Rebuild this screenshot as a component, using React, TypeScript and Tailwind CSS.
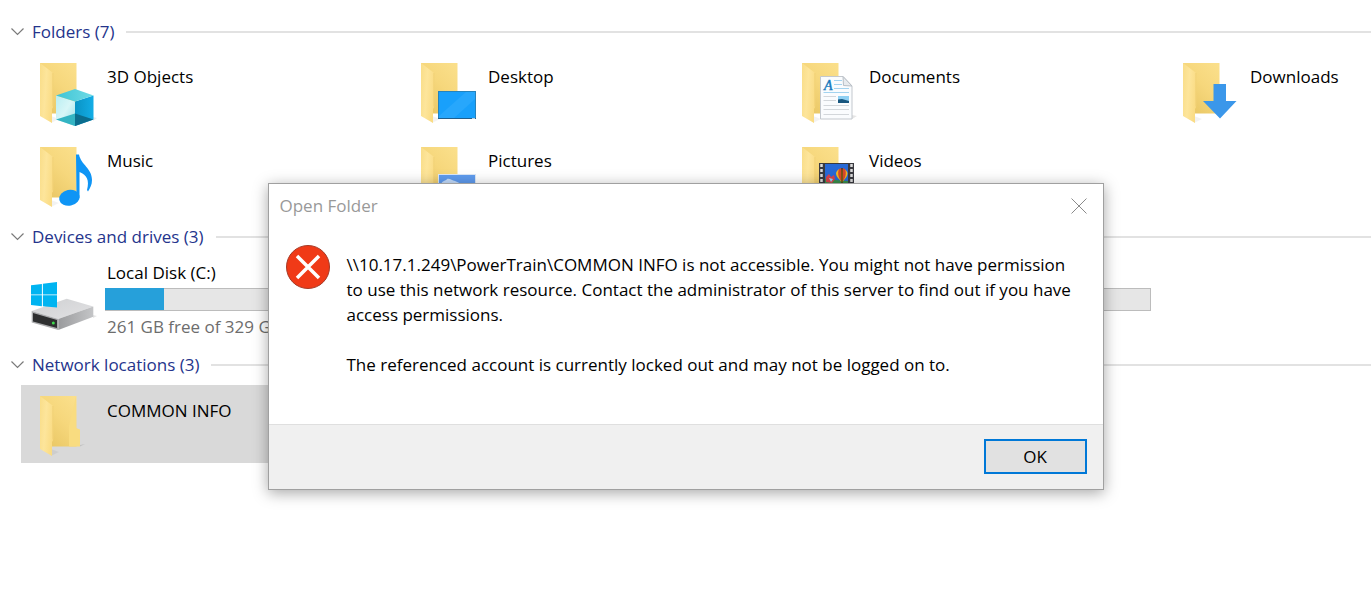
import { useId, type ReactNode } from "react";

function FolderIcon({ children }: { children?: ReactNode }) {
  const id = useId();
  const back = `${id}-back`;
  const flap = `${id}-flap`;
  return (
    <svg className="h-[70px] w-[74px] shrink-0" viewBox="0 0 74 70" aria-hidden="true">
      <defs>
        <linearGradient id={back} x1="1" y1="0" x2="0.3" y2="1">
          <stop offset="0" stopColor="#fbe08c" />
          <stop offset="0.5" stopColor="#f6d77c" />
          <stop offset="1" stopColor="#eac866" />
        </linearGradient>
        <linearGradient id={flap} x1="0" y1="0" x2="1" y2="0.3">
          <stop offset="0" stopColor="#f9dd88" />
          <stop offset="0.5" stopColor="#fde59b" />
          <stop offset="1" stopColor="#fadc85" />
        </linearGradient>
      </defs>
      <g transform={children ? undefined : "translate(0 -1)"}>
        <path d="M22 64L30 60L22 57Z" fill="#000" opacity="0.05" />
        <path d="M11 4H47.500V54.500H22L11 50Z" fill={`url(#${back})`} />
        {!children && (
          <>
            <path d="M47 4V36L51 37.500V54.500H40V34Z" fill="#f9dc80" />
            <path d="M51 53L56 52L51 54.500Z" fill="#000" opacity="0.1" />
          </>
        )}
        <path d="M11 4L23.500 13.500Q24.300 14.200 24.300 15V47.500L23 50V64L11 57Z" fill={`url(#${flap})`} />
        <path d="M23.800 14V47.500" stroke="#e6c260" strokeWidth="0.600" opacity="0.700" />
      </g>
      {children}
    </svg>
  );
}

function Cube() {
  const id = useId();
  return (
    <>
      <defs>
        <linearGradient id={`${id}-left`} x1="0" y1="0" x2="1" y2="1">
          <stop offset="0" stopColor="#b9eef2" />
          <stop offset="0.5" stopColor="#d8f6f7" />
          <stop offset="1" stopColor="#9adfe8" />
        </linearGradient>
        <linearGradient id={`${id}-right`} x1="0" y1="0" x2="1" y2="0">
          <stop offset="0" stopColor="#0a93c4" />
          <stop offset="1" stopColor="#13ade6" />
        </linearGradient>
        <linearGradient id={`${id}-top`} x1="0" y1="0" x2="1" y2="0">
          <stop offset="0" stopColor="#3ec4d4" />
          <stop offset="1" stopColor="#6fdbe6" />
        </linearGradient>
      </defs>
      <path d="M64 62L68 59L64 58Z" fill="#000" opacity="0.08" />
      <path d="M27 36.500L46 42.500V67L27 60.500Z" fill={`url(#${id}-left)`} />
      <path d="M64.500 36.500L46 42.500V67L64.500 60.500Z" fill={`url(#${id}-right)`} />
      <path d="M46 30L64.500 36.500L46 42.500L27 36.500Z" fill={`url(#${id}-top)`} />
      <path d="M27 60.500L46 54.500V67Z" fill="#34b4c3" />
      <path d="M64.500 60.500L46 54.500V67Z" fill="#0b6d8e" />
    </>
  );
}

function Monitor() {
  return (
    <>
      <rect x="28.500" y="32.500" width="37" height="27" fill="#18a0fb" stroke="#2583bd" />
      <path d="M29 59V57L56 33H65V40L44 59Z" fill="#3fb2ff" opacity="0.4" />
      <path d="M28 59.500H66" stroke="#215f8c" />
      <path d="M62 59.500H65" stroke="#fff" opacity="0.7" />
    </>
  );
}

function Page() {
  return (
    <>
      <path d="M61 60L66 57L61 56Z" fill="#000" opacity="0.1" />
      <path d="M29.500 17.500H52L61 27V60H29.500Z" fill="#fafcfe" stroke="#c3c8ce" />
      <path d="M52 17.500L52.500 26.500L61 27Z" fill="#e8ebee" stroke="#b9bfc6" />
      <text x="33" y="31" fontSize="14" fontStyle="italic" fontFamily="Liberation Serif, serif" fill="#1478bd" stroke="#1478bd" strokeWidth="0.400">A</text>
      <path d="M43 21.500H51M43 25.500H51M43 29.500H58M32.500 33.500H58" stroke="#a3d3ef" />
      <path d="M32.500 37.500H45M32.500 41.500H45M32.500 46.500H58M32.500 50.500H58M32.500 55.500H58" stroke="#d3d7db" />
      <rect x="47" y="37" width="11" height="7" fill="#8fd0f3" />
      <path d="M47 40.500L51 40L58 42V44H47Z" fill="#17567f" />
    </>
  );
}

function DownArrow() {
  return <path d="M41.500 25H54V42H64.500L48 59.500L31 42H41.500Z" fill="#3b97ea" />;
}

function Note() {
  return (
    <>
      <path d="M47 11.500H50C52 22 63 25 63 37C63 42 61 45 59 48.500L58 47C60.500 37 58 32 50.500 29V55H47.500Z" fill="#0f95f5" />
      <ellipse cx="40.400" cy="54.800" rx="10.300" ry="7.900" transform="rotate(-12 40.400 54.800)" fill="#0f95f5" />
    </>
  );
}

function Photo() {
  return (
    <>
      <rect x="28.500" y="31.500" width="37" height="28" fill="#5f9bee" stroke="#dce8f6" />
      <path d="M31 41C33 37 36 38 37 36C40 35 42 38 45 38C49 40 52 41 54 43H30Z" fill="#c4dcfb" />
    </>
  );
}

function Film() {
  return (
    <>
      <rect x="28" y="20" width="35" height="38" fill="#3a3a40" />
      <path d="M30.500 21V58M60.500 21V58" stroke="#dcdcdc" strokeWidth="2.500" strokeDasharray="3 2" />
      <rect x="34" y="21" width="23" height="36" fill="#2869d6" />
      <path d="M34 36C38 32 41 34 44 37L57 38V57H34Z" fill="#3a8f4a" />
      <path d="M35 34L38 31L40 34L43 32L44 36L41 40L35 39Z" fill="#d9434c" />
      <path d="M38 35L42 36L40 39Z" fill="#8fd4ff" />
      <path d="M45 30A6 6 0 0 1 56.500 30C56.500 35 52 37 51 40C50 37 45 35 45 30Z" fill="#f3b723" />
      <path d="M48 26C46 31 48 35 50 38L50.500 25ZM54 26C56 31 54 35 52 38L51.500 25Z" fill="#d9482b" />
      <path d="M51 25V40" stroke="#35220d" strokeWidth="1.200" />
    </>
  );
}

function DriveIcon() {
  const id = useId();
  return (
    <svg className="mt-3.5 h-[60px] w-[74px] shrink-0" viewBox="0 0 74 60" aria-hidden="true">
      <defs>
        <linearGradient id={`${id}-top`} x1="0" y1="0" x2="1" y2="1">
          <stop offset="0" stopColor="#cfd0d2" />
          <stop offset="1" stopColor="#e2e2e4" />
        </linearGradient>
        <linearGradient id={`${id}-side`} x1="0" y1="0" x2="1" y2="0">
          <stop offset="0" stopColor="#9a9b9d" />
          <stop offset="1" stopColor="#c4c5c7" />
        </linearGradient>
      </defs>
      <path d="M64 40L68 41L64 43Z" fill="#000" opacity="0.1" />
      <path d="M2.700 36L37.700 23.700L64.300 31.500L29.300 44Z" fill={`url(#${id}-top)`} />
      <path d="M64.300 31.500V41.700L29.300 55V44Z" fill={`url(#${id}-side)`} />
      <path d="M2.700 36L29.300 44V55L2.700 47.500Z" fill="#aaabad" />
      <path d="M4 38L28 45V53L4 46.500Z" fill="#2e2f30" />
      <circle cx="24.300" cy="48" r="1.500" fill="#3ddc4c" />
      <path d="M2 10.300L12.900 8.900V19.500H2ZM13.900 8.800L28 7V19.500H13.900ZM2 20.300H12.900V31.200L2 30ZM13.900 20.300H28V32.500L13.900 31.300Z" fill="#00b4f1" />
    </svg>
  );
}

function Section({ title, children, id }: { title: string; id: string; children: ReactNode }) {
  return (
    <section aria-labelledby={id}>
      <div className="flex h-7 items-center pl-[11px]">
        <button type="button" aria-label={`Collapse ${title}`} className="mr-2 w-[13px]">
          <svg className="h-2 w-[13px]" viewBox="0 0 13 8" fill="none" aria-hidden="true">
            <path d="M0.500 0.500L6.500 6.500L12.500 0.500" stroke="#7a7a7a" strokeWidth="1.200" />
          </svg>
        </button>
        <h2 id={id} className="mr-3 text-[#24348c]">{title}</h2>
        <div className="h-0.5 flex-1 bg-[#e2e2e2]" />
      </div>
      {children}
    </section>
  );
}

function Item({ label, icon, selected }: { label: string; icon?: ReactNode; selected?: boolean }) {
  return (
    <li className={selected ? "flex h-[78px] gap-1 bg-[#d9d9d9] pt-2 pl-2" : "flex h-[78px] gap-1 pt-2 pl-2"}>
      <FolderIcon>{icon}</FolderIcon>
      <span className="mt-1.5 whitespace-nowrap">{label}</span>
    </li>
  );
}

function Usage({ percent, label }: { percent: number; label: string }) {
  return (
    <div role="meter" aria-label={label} aria-valuenow={percent} aria-valuemin={0} aria-valuemax={100} className="h-[23px] w-[284px] border border-[#bcbcbc] bg-[#e6e6e6]">
      <div className="-mt-px -ml-px h-[22px] bg-[#26a0da]" style={{ width: `${percent}%` }} />
    </div>
  );
}

const folders = [
  { label: "3D Objects", icon: <Cube /> },
  { label: "Desktop", icon: <Monitor /> },
  { label: "Documents", icon: <Page /> },
  { label: "Downloads", icon: <DownArrow /> },
  { label: "Music", icon: <Note /> },
  { label: "Pictures", icon: <Photo /> },
  { label: "Videos", icon: <Film /> },
];

export default function App() {
  return (
    <div className="relative min-h-screen overflow-hidden bg-white font-['Open_Sans','Noto_Sans',sans-serif] text-[17px] leading-6 text-black">
      <main className="flex flex-col gap-2.5 pt-[18px]">
        <Section id="folders" title="Folders (7)">
          <ul className="mt-[5px] ml-[21px] grid grid-cols-[repeat(3,381px)_1fr] gap-y-1.5">
            {folders.map((f) => (
              <Item key={f.label} label={f.label} icon={f.icon} />
            ))}
          </ul>
        </Section>
        <Section id="drives" title="Devices and drives (3)">
          <ul className="mt-2.5 ml-[21px] grid grid-cols-[repeat(3,381px)_1fr]">
            <li className="flex h-20 gap-0.5 pl-2">
              <DriveIcon />
              <div className="flex flex-col">
                <span className="pl-0.5">Local Disk (C:)</span>
                <div className="mt-[3px] mb-1">
                  <Usage percent={21} label="Local Disk (C:) space used" />
                </div>
                <span className="pl-0.5 text-[#6d6d6d]">261 GB free of 329 GB</span>
              </div>
            </li>
            <li />
            <li className="pt-[27px] pl-[84px]">
              <Usage percent={0} label="Space used" />
            </li>
          </ul>
        </Section>
        <Section id="network" title="Network locations (3)">
          <ul className="mt-1.5 ml-[21px] grid grid-cols-[repeat(3,381px)_1fr]">
            <Item label="COMMON INFO" selected />
          </ul>
        </Section>
      </main>

      <div className="absolute inset-x-0 top-[183px] flex justify-center">
        <div role="alertdialog" aria-labelledby="dialog-title" aria-describedby="dialog-message" className="w-[836px] border border-[#a0a0a0] bg-white shadow-[0_3px_14px_rgba(0,0,0,0.35)]">
          <div className="flex items-center justify-between pt-2.5 pr-4 pl-[11px]">
            <h1 id="dialog-title" className="text-[#999999]">Open Folder</h1>
            <button type="button" aria-label="Close">
              <svg className="size-4" viewBox="0 0 16 16" fill="none" aria-hidden="true">
                <path d="M0.500 0.500L15.500 15.500M15.500 0.500L0.500 15.500" stroke="#8a8a8a" />
              </svg>
            </button>
          </div>
          <div className="flex gap-[17px] pt-[27px] pb-[47px] pl-[17px]">
            <svg className="size-11 shrink-0" viewBox="0 0 44 44" aria-hidden="true">
              <circle cx="22" cy="22" r="21.500" fill="#f03a17" stroke="#a63a26" />
              <path d="M11 11L33 33M33 11L11 33" stroke="#fff" strokeWidth="3.500" />
            </svg>
            <div id="dialog-message" className="mt-[7px] leading-[25px]">
              <p>
                \\10.17.1.249\PowerTrain\COMMON INFO is not accessible. You might not have permission
                <br />
                to use this network resource. Contact the administrator of this server to find out if you have
                <br />
                access permissions.
              </p>
              <p className="mt-[25px]">The referenced account is currently locked out and may not be logged on to.</p>
            </div>
          </div>
          <div className="flex justify-end border-t border-[#dfdfdf] bg-[#f0f0f0] pt-3.5 pr-4 pb-[15px]">
            <button type="button" className="h-[35px] w-[103px] border-2 border-[#0078d7] bg-[#e1e1e1]">OK</button>
          </div>
        </div>
      </div>
    </div>
  );
}
